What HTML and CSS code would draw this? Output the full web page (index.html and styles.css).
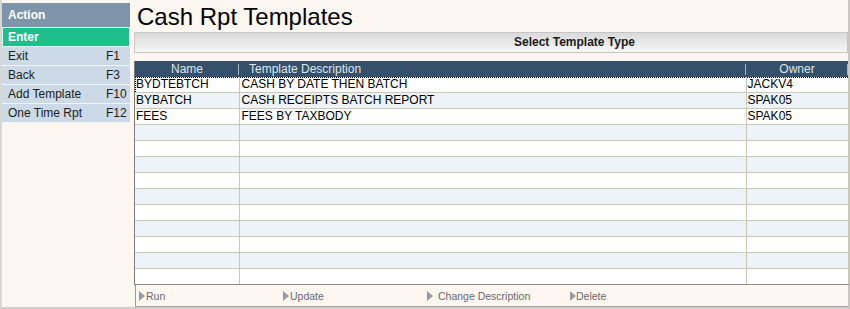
FILE: index.html
```html
<!DOCTYPE html>
<html>
<head>
<meta charset="utf-8">
<link rel="stylesheet" href="styles.css">
</head>
<body>
<div class="page">
  <aside class="side">
    <div class="side-head">Action</div>
    <div class="side-item enter">Enter</div>
    <div class="side-item"><span>Exit</span><span class="key">F1</span></div>
    <div class="side-item"><span>Back</span><span class="key">F3</span></div>
    <div class="side-item"><span>Add Template</span><span class="key">F10</span></div>
    <div class="side-item"><span>One Time Rpt</span><span class="key">F12</span></div>
  </aside>
  <main class="main">
    <h1 class="title">Cash Rpt Templates</h1>
    <div class="typebar">Select Template Type</div>
    <div class="grid">
      <table>
        <colgroup><col class="c1"><col class="c2"><col class="c3"></colgroup>
        <thead>
          <tr><th class="th-name">Name</th><th class="th-desc">Template Description</th><th class="th-owner">Owner</th></tr>
        </thead>
        <tbody>
          <tr class="focus"><td>BYDTEBTCH</td><td>CASH BY DATE THEN BATCH</td><td>JACKV4</td></tr>
          <tr><td>BYBATCH</td><td>CASH RECEIPTS BATCH REPORT</td><td>SPAK05</td></tr>
          <tr><td>FEES</td><td>FEES BY TAXBODY</td><td>SPAK05</td></tr>
          <tr><td></td><td></td><td></td></tr>
          <tr><td></td><td></td><td></td></tr>
          <tr><td></td><td></td><td></td></tr>
          <tr><td></td><td></td><td></td></tr>
          <tr><td></td><td></td><td></td></tr>
          <tr><td></td><td></td><td></td></tr>
          <tr><td></td><td></td><td></td></tr>
          <tr><td></td><td></td><td></td></tr>
          <tr><td></td><td></td><td></td></tr>
          <tr class="last"><td></td><td></td><td></td></tr>
        </tbody>
      </table>
    </div>
    <div class="toolbar">
      <div class="tb-item"><span class="tri"></span>Run</div>
      <div class="tb-item"><span class="tri"></span>Update</div>
      <div class="tb-item tb-wide"><span class="tri tri-gap"></span>Change Description</div>
      <div class="tb-item"><span class="tri tri-tight"></span>Delete</div>
    </div>
  </main>
</div>
</body>
</html>
```

FILE: styles.css
```css
html, body {
  margin: 0;
  padding: 0;
}
body {
  width: 850px;
  height: 309px;
  overflow: hidden;
  background: #fdf6f1;
  font-family: "Liberation Sans", Arial, sans-serif;
  color: #111;
}
.page {
  box-sizing: border-box;
  height: 309px;
  display: flex;
  gap: 4px;
  border-left: 2px solid #d9d6d4;
  border-right: 2px solid #c9c7c6;
  border-bottom: 2px solid #d0cecc;
}
.side {
  width: 128px;
  flex: none;
  padding-top: 3px;
}
.side-head {
  height: 24px;
  line-height: 24px;
  background: #7e94a9;
  color: #fff;
  font-weight: bold;
  font-size: 12px;
  padding-left: 6px;
}
.side-item {
  display: flex;
  height: 18px;
  line-height: 18px;
  font-size: 12px;
  color: #1c1c1c;
  background: #cbdae6;
  border-bottom: 1px solid #f2f5f8;
  padding-left: 6px;
}
.side-item .key {
  margin-left: auto;
  width: 24px;
}
.side-item.enter {
  background: #1fbf8b;
  color: #fff;
  font-weight: bold;
  border: 1px solid #e3eeee;
  padding-left: 5px;
}
.main {
  flex: 1;
  min-width: 0;
  display: flex;
  flex-direction: column;
}
.title {
  margin: 0;
  height: 29px;
  padding: 3px 0 0 3px;
  font-size: 24px;
  line-height: 28px;
  font-weight: normal;
  color: #000;
}
.typebar {
  height: 19px;
  border: 1px solid #c6c6c6;
  background: linear-gradient(#dadada, #f7f7f7);
  font-size: 12px;
  font-weight: bold;
  line-height: 19px;
  padding-left: 379px;
  color: #1a1a1a;
  margin-bottom: 8px;
}
.grid {
  border-left: 1px solid #7c7c7c;
}
table {
  width: 100%;
  table-layout: fixed;
  border-collapse: collapse;
  border-spacing: 0;
}
.c1 { width: 104px; }
.c2 { width: 507px; }
.c3 { width: 102px; }
th {
  height: 16px;
  padding: 0;
  background: linear-gradient(#aab8c4, #aab8c4) right center / 1px 11px no-repeat, #34506a;
  color: #dfe7ee;
  font-weight: normal;
  font-size: 12px;
  line-height: 16px;
  text-align: center;
}
th.th-desc {
  text-align: left;
  padding-left: 10px;
}
td {
  height: 15px;
  padding: 0 0 0 1px;
  font-size: 12px;
  line-height: 15px;
  background-color: #fff;
  border-right: 1px solid #c9c9b6;
  border-bottom: 1px solid #c9c9b6;
  white-space: nowrap;
  overflow: hidden;
  color: #000;
}
td:nth-child(2) {
  padding-left: 2px;
}
tbody tr:nth-child(even) td {
  background-color: #eef3f9;
}
tr.focus td {
  background-image: repeating-linear-gradient(90deg, #000 0 1px, transparent 1px 2px);
  background-size: 100% 1px;
  background-repeat: no-repeat;
}
tr.focus td:first-child {
  background-image: repeating-linear-gradient(90deg, #000 0 1px, transparent 1px 2px), repeating-linear-gradient(180deg, #000 0 1px, transparent 1px 2px);
  background-size: 100% 1px, 1px 100%;
  background-repeat: no-repeat;
}
tr.last td {
  border-bottom: 1px solid #8a8a8a;
}
.toolbar {
  height: 21px;
  margin-left: 1px;
  display: flex;
  align-items: center;
  border-left: 1px solid #9a9a9a;
  border-bottom: 1px solid #a6a6a6;
  padding-left: 3px;
}
.tb-item {
  width: 144px;
  flex: none;
  display: flex;
  align-items: center;
  color: #6a6a6a;
  font-size: 10.5px;
}
.tb-item.tb-wide {
  width: 143px;
}
.tri {
  width: 0;
  height: 0;
  border-left: 6px solid #9c9c9c;
  border-top: 5px solid transparent;
  border-bottom: 5px solid transparent;
  margin-right: 1px;
}
.tri-gap {
  margin-right: 5px;
}
.tri-tight {
  margin-right: 0;
}
```
